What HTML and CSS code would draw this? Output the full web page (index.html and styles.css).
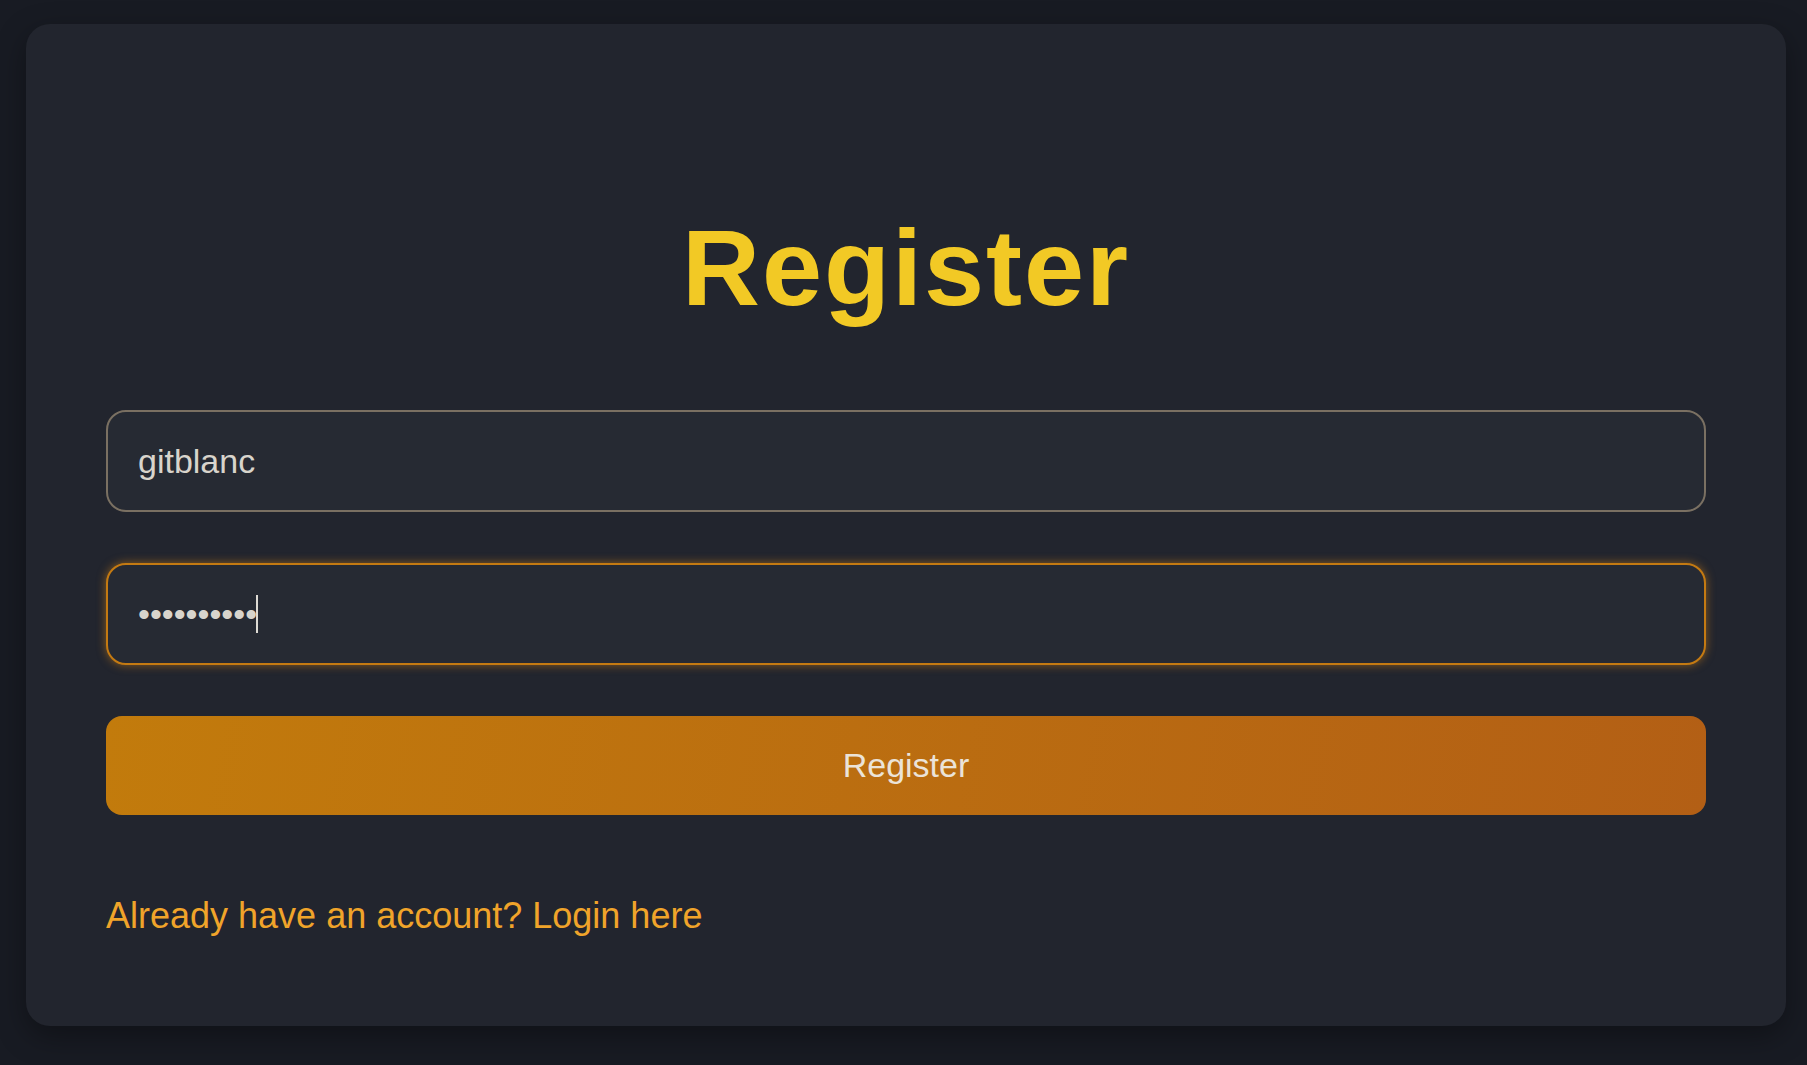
FILE: index.html
```html
<!DOCTYPE html>
<html lang="en">
<head>
<meta charset="utf-8">
<title>Register</title>
<link rel="stylesheet" href="styles.css">
</head>
<body>
<main class="page">
  <section class="card">
    <h1 class="title">Register</h1>
    <form class="form" onsubmit="return false">
      <input class="field" type="text" name="username" value="gitblanc" aria-label="Username">
      <div class="field-wrap">
        <input class="field field-focus" type="password" name="password" value="abcdefghij" aria-label="Password">
        <span class="caret"></span>
      </div>
      <button class="btn" type="submit">Register</button>
    </form>
    <a class="link" href="#">Already have an account? Login here</a>
  </section>
</main>
</body>
</html>
```
FILE: styles.css
```css
html, body {
  margin: 0;
  padding: 0;
  background: #181b23;
}
body {
  font-family: "Liberation Sans", Arial, sans-serif;
}
.page {
  padding: 24px 21px 39px 26px;
}
.card {
  width: 1760px;
  box-sizing: border-box;
  padding: 190px 80px 92px;
  background: #22252e;
  border-radius: 24px;
  box-shadow: 0 10px 30px rgba(0, 0, 0, 0.35);
}
.title {
  margin: 0;
  font: bold 108px/1 "Liberation Sans", Arial, sans-serif;
  letter-spacing: 2px;
  text-align: center;
  color: #f2c925;
}
.form {
  margin: 88px 0 0;
  display: flex;
  flex-direction: column;
  gap: 51px;
}
.field-wrap {
  position: relative;
}
.field {
  display: block;
  width: 100%;
  height: 102px;
  box-sizing: border-box;
  margin: 0;
  padding: 0 30px;
  border: 2px solid #7a7062;
  border-radius: 20px;
  background: #262a33;
  font: 34px "Liberation Sans", Arial, sans-serif;
  color: #d8d4cc;
  outline: none;
}
.field-focus {
  border-color: #c47a12;
  box-shadow: 0 0 10px rgba(222, 136, 20, 0.55);
}
.caret {
  position: absolute;
  left: 150px;
  top: 32px;
  width: 2px;
  height: 38px;
  background: #dddad4;
}
.btn {
  display: block;
  width: 100%;
  height: 99px;
  margin: 0;
  border: 0;
  border-radius: 16px;
  background: linear-gradient(100deg, #c27b0c 0%, #b35f15 100%);
  font: 34px "Liberation Sans", Arial, sans-serif;
  color: #ebe3d8;
  cursor: pointer;
}
.link {
  display: block;
  margin-top: 83px;
  font: 36px/1 "Liberation Sans", Arial, sans-serif;
  color: #f0a42a;
  text-decoration: none;
}
```
